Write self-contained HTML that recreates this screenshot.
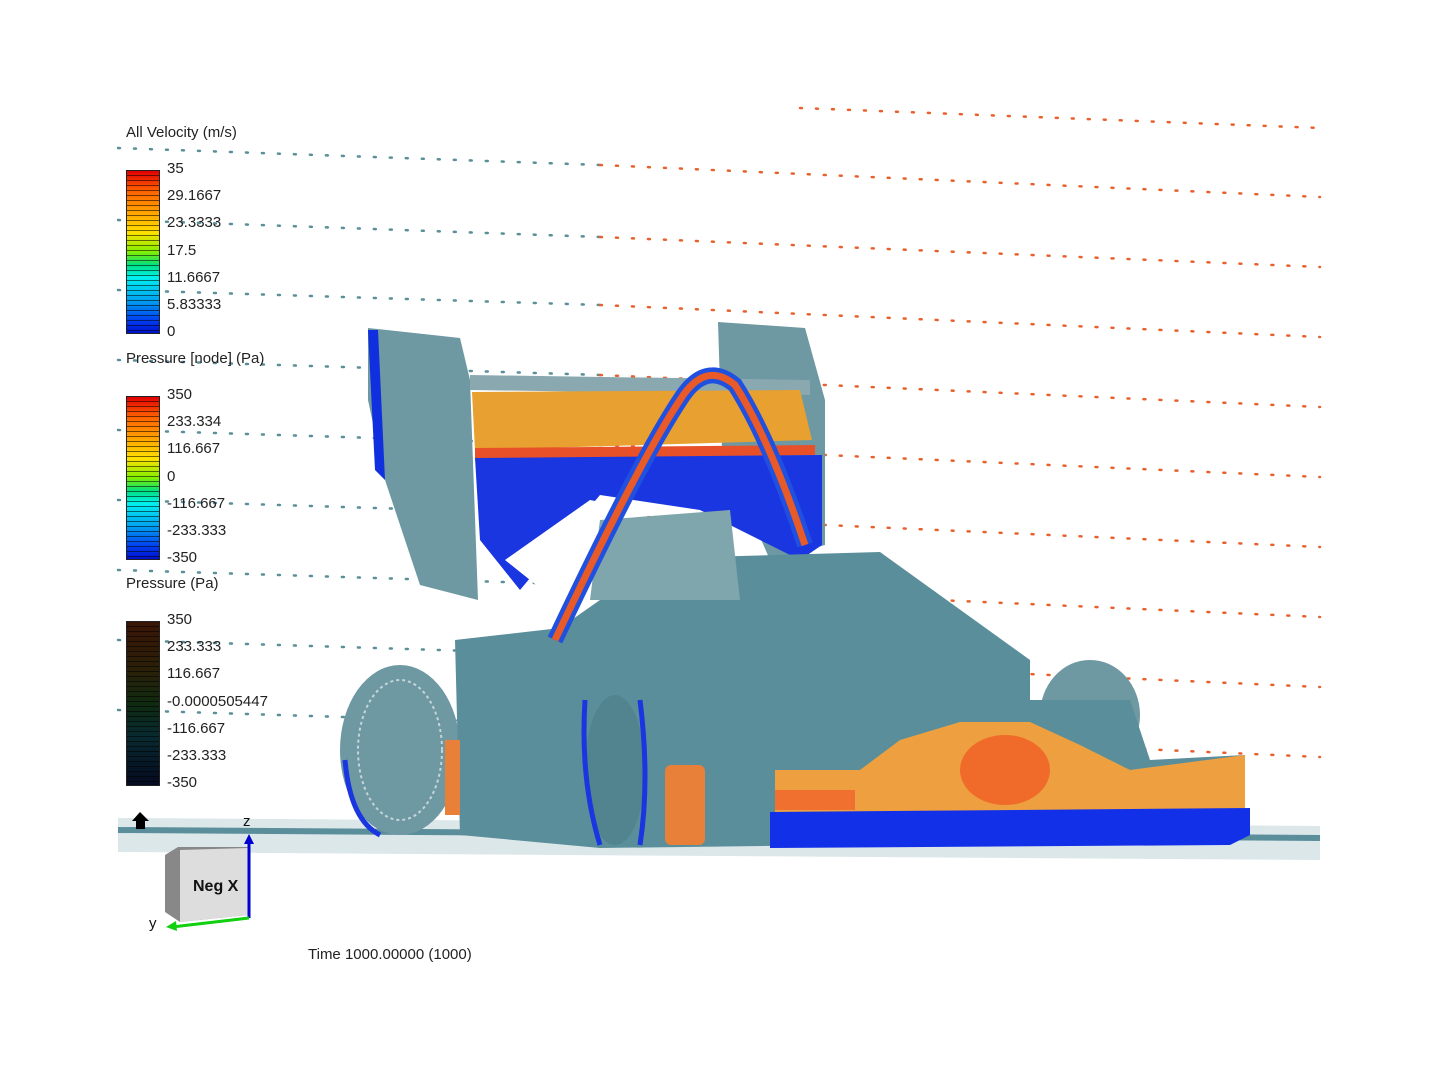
<!DOCTYPE html>
<html><head><meta charset="utf-8"><style>
body{margin:0;width:1440px;height:1080px;background:#fff;overflow:hidden;position:relative;font-family:"Liberation Sans",sans-serif;}
.t{position:absolute;font-size:15px;color:#222;}
.bar{position:absolute;left:126px;width:32px;border:1px solid #222;}
.bar::after{content:"";position:absolute;inset:0;background:repeating-linear-gradient(to bottom,transparent 0,transparent 4px,rgba(0,0,0,.55) 4px,rgba(0,0,0,.55) 5px);}
.jet{background:linear-gradient(to bottom,#e00000 0%,#ff6000 12%,#ffa000 25%,#ffe000 38%,#80f000 50%,#00e080 58%,#00f0f0 66%,#00a0f0 80%,#0040f0 92%,#0010d0 100%);}
.dk{background:linear-gradient(to bottom,#3a1505 0%,#2a2008 30%,#0f2a10 50%,#082a30 70%,#050a20 100%);}
</style></head><body>
<svg width="1440" height="1080" style="position:absolute;left:0;top:0">
<g stroke-dasharray="2 14" stroke-linecap="round" stroke-width="2.5">
<g stroke="#5a8e9a">
<path d="M118 148 L600 165"/><path d="M118 220 L600 237"/><path d="M118 290 L600 305"/><path d="M118 360 L600 375"/><path d="M118 430 L600 445"/><path d="M118 500 L600 515"/><path d="M118 570 L600 585"/><path d="M118 640 L600 655"/><path d="M118 710 L600 725"/>
</g>
<g stroke="#e8602c">
<path d="M800 108 L1320 128"/><path d="M600 165 L1320 197"/><path d="M600 237 L1320 267"/><path d="M600 305 L1320 337"/><path d="M600 375 L1320 407"/><path d="M600 445 L1320 477"/><path d="M600 515 L1320 547"/><path d="M600 585 L1320 617"/><path d="M600 655 L1320 687"/><path d="M600 725 L1320 757"/>
</g>
</g>
<!-- floor -->
<path d="M118 818 L1320 826 L1320 860 L118 852Z" fill="#b9d0d5" opacity=".5"/>
<path d="M118 830 L1320 838" stroke="#5a8e9a" stroke-width="6"/>
<!-- rear wing endplates -->
<polygon points="368,328 460,338 470,380 478,600 420,585 385,480 368,400" fill="#6e98a2"/>
<polygon points="718,322 805,328 825,400 825,545 770,560 722,450" fill="#6e98a2"/>
<polygon points="368,330 378,330 385,480 375,470" fill="#1030e0"/>
<!-- wing -->
<polygon points="470,375 810,380 810,395 470,390" fill="#8aa8b0"/>
<polygon points="472,392 800,390 812,440 475,450" fill="#e8a030"/>
<polygon points="475,448 815,445 815,455 475,460" fill="#e8502a"/>
<polygon points="475,458 822,455 822,545 800,560 760,540 700,510 600,495 520,590 480,540" fill="#1a36e0"/>
<polygon points="505,560 590,500 640,510 580,620" fill="#fff"/>
<!-- wheels behind -->
<ellipse cx="1090" cy="715" rx="50" ry="55" fill="#6e98a2"/>
<ellipse cx="400" cy="750" rx="60" ry="85" fill="#6e98a2"/>
<ellipse cx="400" cy="750" rx="42" ry="70" fill="none" stroke="#fff" stroke-width="2" stroke-dasharray="3 3" opacity=".6"/>
<!-- main body -->
<polygon points="455,640 560,628 600,600 600,560 880,552 1030,660 1030,700 1130,700 1150,760 1245,755 1245,840 600,848 460,835" fill="#5a8e9a"/>
<polygon points="600,520 730,510 740,600 590,600" fill="#7fa5ad"/>
<ellipse cx="615" cy="770" rx="30" ry="75" fill="#52848f"/>
<path d="M585 700 Q580 780 600 845" stroke="#1a36e0" stroke-width="5" fill="none"/>
<path d="M640 700 Q650 780 640 845" stroke="#1a36e0" stroke-width="5" fill="none"/>
<path d="M345 760 Q350 820 380 835" stroke="#1a36e0" stroke-width="5" fill="none"/>
<!-- side orange bits -->
<rect x="665" y="765" width="40" height="80" rx="6" fill="#e8803a"/>
<rect x="445" y="740" width="15" height="75" fill="#e8803a"/>
<!-- nose -->
<polygon points="775,770 860,770 900,740 960,722 1030,722 1080,745 1130,770 1245,755 1245,810 775,812" fill="#eea040"/>
<ellipse cx="1005" cy="770" rx="45" ry="35" fill="#f06a2a"/>
<rect x="775" y="790" width="80" height="20" fill="#f07030"/>
<polygon points="770,812 1250,808 1250,835 1230,845 770,848" fill="#1230e8"/>
<!-- roll hoop -->
<path d="M555 640 Q640 460 680 400 Q705 360 735 385 Q770 440 805 545" stroke="#2050e0" stroke-width="16" fill="none"/>
<path d="M555 640 Q640 460 680 400 Q705 360 735 385 Q770 440 805 545" stroke="#e85a28" stroke-width="7" fill="none"/>
<!-- axis -->
<path d="M140 812 L132 821 L136 821 L136 829 L145 829 L145 821 L149 821Z" fill="#000"/>
<polygon points="165,855 178,847 248,847 248,915 180,922 165,912" fill="#888"/>
<polygon points="180,850 248,848 248,915 180,922" fill="#ddd"/>
<line x1="249" y1="918" x2="249" y2="838" stroke="#0000d0" stroke-width="3"/>
<polygon points="249,834 244,844 254,844" fill="#0000d0"/>
<line x1="249" y1="918" x2="172" y2="927" stroke="#10d010" stroke-width="3"/>
<polygon points="166,927 176,921 177,931" fill="#10d010"/>
<text x="193" y="891" font-family="Liberation Sans" font-weight="bold" font-size="16" fill="#111">Neg X</text>
<text x="243" y="826" font-family="Liberation Sans" font-size="15" fill="#111">z</text>
<text x="149" y="928" font-family="Liberation Sans" font-size="15" fill="#111">y</text>
</svg>
<div class="t" style="left:126px;top:124px">All Velocity (m/s)</div>
<div class="bar jet" style="top:170px;height:162px"></div>
<div class="t" style="left:167px;top:160px">35</div>
<div class="t" style="left:167px;top:187px">29.1667</div>
<div class="t" style="left:167px;top:214px">23.3333</div>
<div class="t" style="left:167px;top:242px">17.5</div>
<div class="t" style="left:167px;top:269px">11.6667</div>
<div class="t" style="left:167px;top:296px">5.83333</div>
<div class="t" style="left:167px;top:323px">0</div>
<div class="t" style="left:126px;top:350px">Pressure [node] (Pa)</div>
<div class="bar jet" style="top:396px;height:162px"></div>
<div class="t" style="left:167px;top:386px">350</div>
<div class="t" style="left:167px;top:413px">233.334</div>
<div class="t" style="left:167px;top:440px">116.667</div>
<div class="t" style="left:167px;top:468px">0</div>
<div class="t" style="left:167px;top:495px">-116.667</div>
<div class="t" style="left:167px;top:522px">-233.333</div>
<div class="t" style="left:167px;top:549px">-350</div>
<div class="t" style="left:126px;top:575px">Pressure (Pa)</div>
<div class="bar dk" style="top:621px;height:163px"></div>
<div class="t" style="left:167px;top:611px">350</div>
<div class="t" style="left:167px;top:638px">233.333</div>
<div class="t" style="left:167px;top:665px">116.667</div>
<div class="t" style="left:167px;top:693px">-0.0000505447</div>
<div class="t" style="left:167px;top:720px">-116.667</div>
<div class="t" style="left:167px;top:747px">-233.333</div>
<div class="t" style="left:167px;top:774px">-350</div>
<div class="t" style="left:308px;top:946px;font-size:15px">Time 1000.00000 (1000)</div>
</body></html>
